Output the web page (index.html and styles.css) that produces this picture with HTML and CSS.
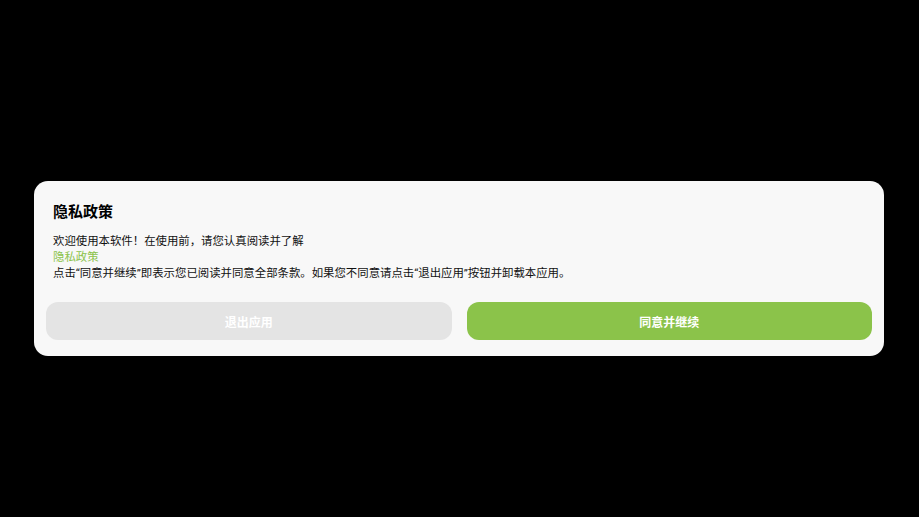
FILE: index.html
```html
<!DOCTYPE html>
<html lang="zh-CN">
<head>
<meta charset="utf-8">
<title>隐私政策</title>
<link rel="stylesheet" href="styles.css">
</head>
<body>
<div class="dialog">
  <div class="content">
    <h1 class="title">隐私政策</h1>
    <p class="line">欢迎使用本软件！在使用前，请您认真阅读并了解</p>
    <p class="line"><a class="link" href="#">隐私政策</a></p>
    <p class="line">点击“同意并继续”即表示您已阅读并同意全部条款。如果您不同意请点击“退出应用”按钮并卸载本应用。</p>
  </div>
  <div class="actions">
    <button class="btn btn-exit">退出应用</button>
    <button class="btn btn-agree">同意并继续</button>
  </div>
</div>
</body>
</html>
```
FILE: styles.css
```css
html, body {
  margin: 0;
  padding: 0;
  background: #000;
  height: 100%;
}
body {
  font-family: "Noto Sans CJK SC", "Noto Sans", sans-serif;
  color: #111;
  padding-top: 181px;
  box-sizing: border-box;
}
.dialog {
  margin: 0 35px 0 34px;
  background: #f8f8f8;
  border-radius: 14px;
  padding: 20px 12px 16px;
  display: flex;
  flex-direction: column;
}
.content {
  padding: 0 7px;
}
.title {
  margin: 0 0 12px;
  font-size: 15px;
  line-height: 20px;
  font-weight: 700;
  color: #000;
}
.line {
  margin: 0;
  font-family: Roboto, "Noto Sans CJK SC", sans-serif;
  font-size: 11.4px;
  line-height: 16px;
  color: #111;
}
.link {
  color: #8bc34a;
  text-decoration: none;
}
.actions {
  display: grid;
  grid-template-columns: 1fr 1fr;
  gap: 15px;
  margin-top: 21px;
}
.btn {
  height: 38px;
  border: none;
  border-radius: 12px;
  font-family: "Noto Sans CJK SC", "Noto Sans", sans-serif;
  font-size: 12px;
  font-weight: 700;
  color: #fff;
  cursor: pointer;
}
.btn-exit {
  background: #e4e4e4;
}
.btn-agree {
  background: #8bc34a;
}
```
